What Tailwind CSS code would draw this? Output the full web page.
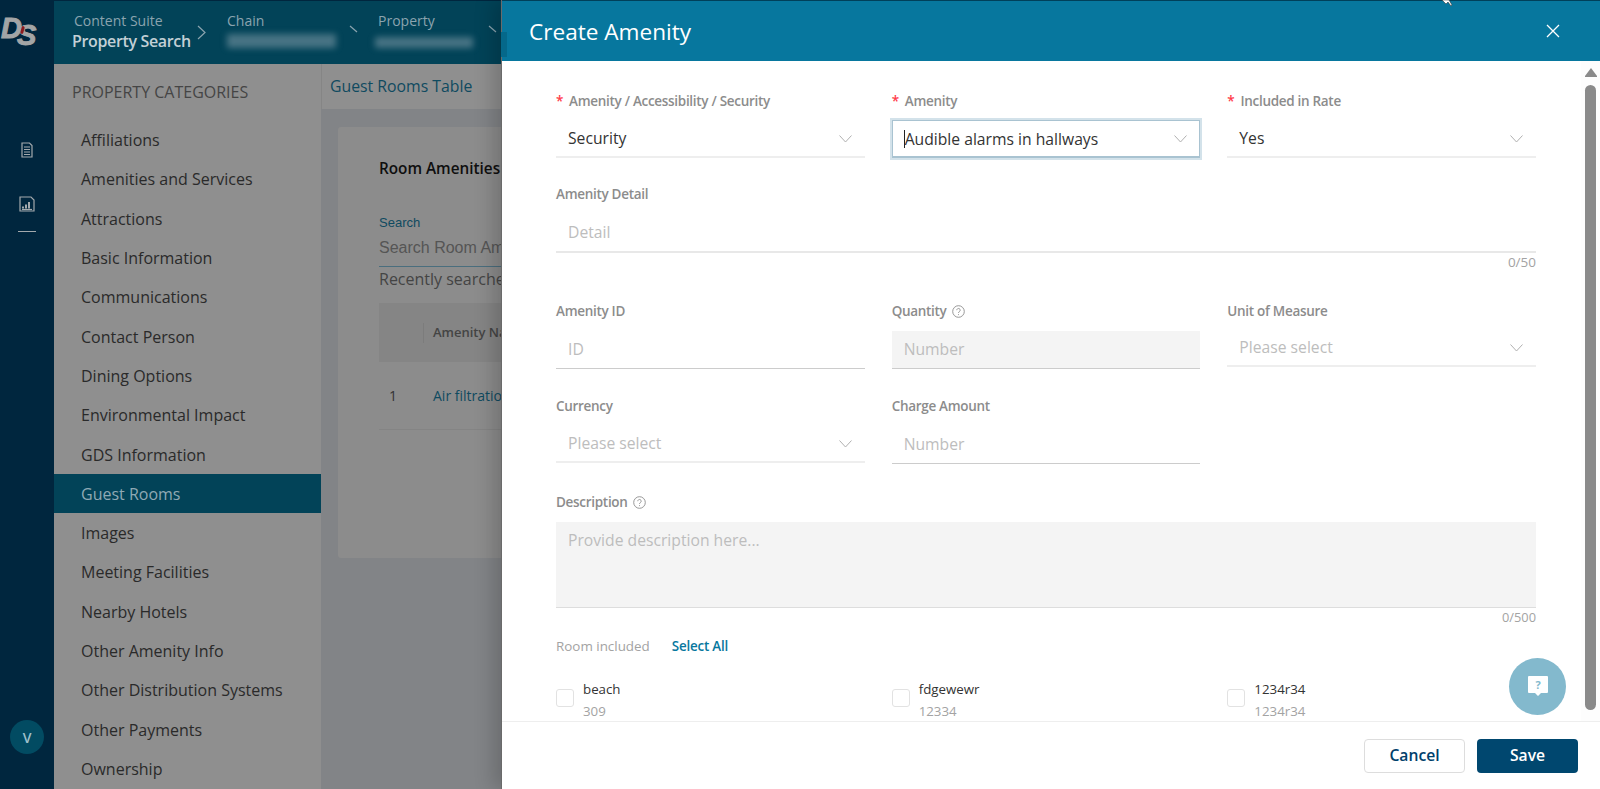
<!DOCTYPE html>
<html lang="en">
<head>
    <meta charset="UTF-8">
    <title>Create Amenity</title>
    <script src="https://cdn.jsdelivr.net/npm/@tailwindcss/browser@4"></script>
</head>
<body class="font-['Open_Sans',sans-serif] overflow-hidden bg-[#828487]">
<div class="relative flex h-[789px] w-[1600px] overflow-hidden">

    <!-- Icon rail -->
    <aside class="flex w-[54px] shrink-0 flex-col items-center bg-[#00263e]">
        <div class="relative mt-[10px] ml-[1px] h-[36px] w-[40px] self-start font-['Liberation_Sans',sans-serif] text-[29px] leading-[36px] font-bold text-[#a3a5a6] italic [-webkit-text-stroke:1px_#a3a5a6]">
            <span class="absolute top-0 left-0">D</span>
            <span class="absolute top-[7px] left-[16px]">S</span>
            <span class="absolute top-[16px] left-[20px] h-[8px] w-[3px] rotate-[15deg] rounded-full bg-[#8c1a1f]"></span>
        </div>
        <svg class="mt-[96px]" width="12" height="16" viewBox="0 0 12 16" fill="none" stroke="#a3a9ad" stroke-width="1.2"><path d="M1 1h7.5L11 3.5V15H1z"/><path d="M3 5h6M3 7.5h6M3 10h6M3 12.5h6"/></svg>
        <svg class="mt-[38px]" width="16" height="16" viewBox="0 0 16 16" fill="none" stroke="#a3a9ad" stroke-width="1.2"><path d="M1 1h11l3 3v11H1z"/><path d="M4 12.5v-2M7 12.5v-4M10 12.5V6" stroke-width="2"/><path d="M3 13.5h10"/></svg>
        <div class="mt-[19px] h-px w-[18px] bg-[#a3a9ad]"></div>
        <div class="mt-auto mb-[35px] flex h-[34px] w-[34px] items-center justify-center rounded-full bg-[#024b62] text-[14px] font-semibold text-[#9fc0cb]">V</div>
    </aside>

    <div class="flex min-w-0 flex-1 flex-col">
        <!-- Breadcrumb header -->
        <header class="flex h-[64px] shrink-0 items-center border-t border-[#00263e] bg-[#024358]">
            <div class="-mt-[4px] ml-[18px] w-[125px] leading-[20px]">
                <p class="pl-[2px] text-[14px] text-[#8ba4af]">Content Suite</p>
                <p class="text-[16px] font-semibold tracking-[-0.35px] whitespace-nowrap text-[#c3d0d6]">Property Search</p>
            </div>
            <svg width="9" height="15" viewBox="0 0 9 15" fill="none" stroke="#8ba4af" stroke-width="1.2"><path d="M1 1l7 6.5L1 14"/></svg>
            <div class="-mt-[4px] ml-[21px] w-[122px] leading-[20px]">
                <p class="text-[14px] text-[#8ba4af]">Chain</p>
                <p class="mt-[3px] mb-[3px] h-[14px] w-[109px] bg-[#8ba4af]/50 blur-[3px]"></p>
            </div>
            <svg class="-mt-[8px]" width="9" height="8" viewBox="0 0 9 8" fill="none" stroke="#8ba4af" stroke-width="1.2"><path d="M1 1l7 6"/></svg>
            <div class="-mt-[4px] ml-[20px] w-[110px] leading-[20px]">
                <p class="text-[14px] text-[#8ba4af]">Property</p>
                <p class="mt-[6px] mb-[3px] ml-[-3px] h-[11px] w-[98px] bg-[#8ba4af]/50 blur-[3px]"></p>
            </div>
            <svg class="-mt-[8px]" width="9" height="8" viewBox="0 0 9 8" fill="none" stroke="#8ba4af" stroke-width="1.2"><path d="M1 1l7 6"/></svg>
        </header>

        <div class="flex min-h-0 flex-1">
            <!-- Property categories -->
            <nav class="w-[267px] shrink-0 bg-[#8f8f8f]">
                <h2 class="mt-[18px] ml-[18px] text-[16px] leading-[20px] text-[#454545]">PROPERTY CATEGORIES</h2>
                <ul class="mt-[18.5px] text-[16px] text-[#2a2a2a]">
                    <li class="flex h-[39.3px] items-center pl-[27px]">Affiliations</li>
                    <li class="flex h-[39.3px] items-center pl-[27px]">Amenities and Services</li>
                    <li class="flex h-[39.3px] items-center pl-[27px]">Attractions</li>
                    <li class="flex h-[39.3px] items-center pl-[27px]">Basic Information</li>
                    <li class="flex h-[39.3px] items-center pl-[27px]">Communications</li>
                    <li class="flex h-[39.3px] items-center pl-[27px]">Contact Person</li>
                    <li class="flex h-[39.3px] items-center pl-[27px]">Dining Options</li>
                    <li class="flex h-[39.3px] items-center pl-[27px]">Environmental Impact</li>
                    <li class="flex h-[39.3px] items-center pl-[27px]">GDS Information</li>
                    <li class="flex h-[39.3px] items-center bg-[#024358] pl-[27px] text-[#8fa9b4]">Guest Rooms</li>
                    <li class="flex h-[39.3px] items-center pl-[27px]">Images</li>
                    <li class="flex h-[39.3px] items-center pl-[27px]">Meeting Facilities</li>
                    <li class="flex h-[39.3px] items-center pl-[27px]">Nearby Hotels</li>
                    <li class="flex h-[39.3px] items-center pl-[27px]">Other Amenity Info</li>
                    <li class="flex h-[39.3px] items-center pl-[27px]">Other Distribution Systems</li>
                    <li class="flex h-[39.3px] items-center pl-[27px]">Other Payments</li>
                    <li class="flex h-[39.3px] items-center pl-[27px]">Ownership</li>
                </ul>
            </nav>

            <!-- Page behind the drawer -->
            <main class="min-w-0 flex-1 overflow-hidden whitespace-nowrap">
                <div class="flex h-[45px] items-center border-l border-[#858585] bg-[#8f8f8f] pl-[8px] text-[15.8px] text-[#0f4a60]">Guest Rooms Table</div>
                <section class="mt-[18px] ml-[17px] h-[431px] rounded-l-[3px] bg-[#8c8c8c] pt-[31px] pl-[41px]">
                    <h3 class="text-[15.3px] leading-[20px] font-semibold text-[#0f0f0f]">Room Amenities</h3>
                    <p class="mt-[35px] font-['Liberation_Sans',sans-serif] text-[13px] leading-[20px] text-[#0f4a60]">Search</p>
                    <p class="mt-[4px] h-[30px] border-b border-[#4a6e7e] font-['Liberation_Sans',sans-serif] text-[16px] leading-[22px] text-[#555]">Search Room Amenities</p>
                    <p class="text-[16px] leading-[24px] text-[#444]">Recently searched</p>
                    <div class="mt-[12px] flex h-[59px] items-center bg-[#858585]">
                        <span class="ml-[44px] h-[20px] w-px bg-[#7c7c7c]"></span>
                        <span class="ml-[9px] text-[13px] font-semibold text-[#444]">Amenity Name</span>
                    </div>
                    <div class="mt-[6px] flex h-[62px] items-center border-b border-[#848484] pb-[6px] text-[14px]">
                        <span class="ml-[10px] w-[44px] text-[#333]">1</span>
                        <span class="text-[#0f4a60]">Air filtration</span>
                    </div>
                </section>
            </main>
        </div>
    </div>

    <!-- Smear of the blurred region running over the drawer edge -->
    <div class="absolute top-[32px] left-[501px] z-20 h-[25px] w-[6px] bg-[#05688a]"></div>

    <!-- Create Amenity drawer -->
    <div class="absolute top-0 right-0 bottom-0 z-10 flex w-[1099px] flex-col border-l border-[#6a6a6a] bg-white shadow-[-8px_0_18px_rgba(0,0,0,0.18)]">
        <div class="flex h-[61px] shrink-0 items-center justify-between border-t border-[#00405a] bg-[#07779e] pr-[40px] pl-[27px]">
            <h1 class="pt-[1px] text-[22.6px] text-white">Create Amenity</h1>
            <svg width="14" height="14" viewBox="0 0 14 14" fill="none" stroke="white" stroke-width="1.3"><path d="M1 1l12 12M13 1L1 13"/></svg>
        </div>

        <div class="relative min-h-0 flex-1 overflow-hidden">
            <div class="w-[1034px] pt-[30px] pl-[54px]">
                <!-- row 1 -->
                <div class="grid grid-cols-3 gap-x-[27px]">
                    <div>
                        <label class="flex h-[20px] items-center text-[13.5px] font-semibold tracking-[-0.3px] text-[#8c8c8c]"><span class="mr-[6px] text-[#ff3b4a]">*</span>Amenity / Accessibility / Security</label>
                        <div class="mt-[9px] flex h-[38px] items-center justify-between border-b-2 border-[#eeeeee] pt-[1px] pr-[13px] pl-[12px] text-[15.7px] text-[#333]">Security
                            <svg width="13" height="8" viewBox="0 0 13 8" fill="none" stroke="#b0b0b0"><path d="M.5.5l6 6.5 6-6.5"/></svg>
                        </div>
                    </div>
                    <div>
                        <label class="flex h-[20px] items-center text-[13.5px] font-semibold tracking-[-0.3px] text-[#8c8c8c]"><span class="mr-[6px] text-[#ff3b4a]">*</span>Amenity</label>
                        <div class="mt-[9px] flex h-[38px] items-center justify-between border border-b-2 border-[#a9c3d1] pr-[12px] pl-[11px] text-[15.7px] text-[#333] ring-2 ring-[#d3e2ea]">
                            <span class="border-l border-[#222] leading-[18px]">Audible alarms in hallways</span>
                            <svg width="13" height="8" viewBox="0 0 13 8" fill="none" stroke="#b0b0b0"><path d="M.5.5l6 6.5 6-6.5"/></svg>
                        </div>
                    </div>
                    <div>
                        <label class="flex h-[20px] items-center text-[13.5px] font-semibold tracking-[-0.3px] text-[#8c8c8c]"><span class="mr-[6px] text-[#ff3b4a]">*</span>Included in Rate</label>
                        <div class="mt-[9px] flex h-[38px] items-center justify-between border-b-2 border-[#eeeeee] pt-[1px] pr-[13px] pl-[12px] text-[15.7px] text-[#333]">Yes
                            <svg width="13" height="8" viewBox="0 0 13 8" fill="none" stroke="#b0b0b0"><path d="M.5.5l6 6.5 6-6.5"/></svg>
                        </div>
                    </div>
                </div>

                <!-- detail -->
                <label class="mt-[26px] flex h-[20px] items-center text-[13.5px] font-semibold tracking-[-0.3px] text-[#8c8c8c]">Amenity Detail</label>
                <div class="mt-[10px] flex h-[39px] items-center border-b-2 border-[#e8e8e8] pl-[12px] text-[15.7px] text-[#bdbdbd]">Detail</div>
                <p class="h-[19px] text-right text-[13.5px] leading-[19px] text-[#a3a3a3]">0/50</p>

                <!-- row 3 -->
                <div class="mt-[29px] grid grid-cols-3 gap-x-[27px]">
                    <div>
                        <label class="flex h-[20px] items-center text-[13.5px] font-semibold tracking-[-0.3px] text-[#8c8c8c]">Amenity ID</label>
                        <div class="mt-[10px] flex h-[38px] items-center border-b border-[#cccccc] pl-[12px] text-[15.7px] text-[#bdbdbd]">ID</div>
                    </div>
                    <div>
                        <label class="flex h-[20px] items-center text-[13.5px] font-semibold tracking-[-0.3px] text-[#8c8c8c]">Quantity
                            <svg class="ml-[5px]" width="13" height="13" viewBox="0 0 13 13" fill="none" stroke="#8c8c8c" stroke-width=".9"><circle cx="6.5" cy="6.5" r="5.8"/><path d="M4.8 5.2a1.7 1.7 0 1 1 2.6 1.4c-.6.4-.9.7-.9 1.4"/><path d="M6.5 9.2v.9"/></svg>
                        </label>
                        <div class="mt-[10px] flex h-[38px] items-center border-b border-[#cccccc] bg-[#f4f4f4] pl-[12px] text-[15.7px] text-[#bdbdbd]">Number</div>
                    </div>
                    <div>
                        <label class="flex h-[20px] items-center text-[13.5px] font-semibold tracking-[-0.3px] text-[#8c8c8c]">Unit of Measure</label>
                        <div class="mt-[9px] flex h-[37px] items-center justify-between border-b-2 border-[#eeeeee] pr-[13px] pl-[12px] text-[15.7px] text-[#bdbdbd]">Please select
                            <svg width="13" height="8" viewBox="0 0 13 8" fill="none" stroke="#b0b0b0"><path d="M.5.5l6 6.5 6-6.5"/></svg>
                        </div>
                    </div>
                </div>

                <!-- row 4 -->
                <div class="mt-[27px] grid grid-cols-3 gap-x-[27px]">
                    <div>
                        <label class="flex h-[20px] items-center text-[13.5px] font-semibold tracking-[-0.3px] text-[#8c8c8c]">Currency</label>
                        <div class="mt-[9px] flex h-[38px] items-center justify-between border-b-2 border-[#eeeeee] pt-[2px] pr-[13px] pl-[12px] text-[15.7px] text-[#bdbdbd]">Please select
                            <svg width="13" height="8" viewBox="0 0 13 8" fill="none" stroke="#b0b0b0"><path d="M.5.5l6 6.5 6-6.5"/></svg>
                        </div>
                    </div>
                    <div>
                        <label class="flex h-[20px] items-center text-[13.5px] font-semibold tracking-[-0.3px] text-[#8c8c8c]">Charge Amount</label>
                        <div class="mt-[9px] flex h-[39px] items-center border-b border-[#cccccc] pt-[1px] pl-[12px] text-[15.7px] text-[#bdbdbd]">Number</div>
                    </div>
                    <div></div>
                </div>

                <!-- description -->
                <label class="mt-[28px] flex h-[20px] items-center text-[13.5px] font-semibold tracking-[-0.3px] text-[#8c8c8c]">Description
                    <svg class="ml-[5px]" width="13" height="13" viewBox="0 0 13 13" fill="none" stroke="#8c8c8c" stroke-width=".9"><circle cx="6.5" cy="6.5" r="5.8"/><path d="M4.8 5.2a1.7 1.7 0 1 1 2.6 1.4c-.6.4-.9.7-.9 1.4"/><path d="M6.5 9.2v.9"/></svg>
                </label>
                <div class="mt-[10px] h-[86px] border-b border-[#dddddd] bg-[#f4f4f4] pt-[7px] pl-[12px] text-[15.7px] text-[#bdbdbd]">Provide description here...</div>
                <p class="h-[19px] text-right text-[12.8px] leading-[19px] text-[#a3a3a3]">0/500</p>

                <!-- rooms -->
                <div class="mt-[9px] flex h-[20px] items-center text-[13.4px]">
                    <span class="text-[#a3a3a3]">Room included</span>
                    <span class="ml-[22px] font-semibold tracking-[-0.2px] text-[#07779e]">Select All</span>
                </div>
                <div class="mt-[22px] grid grid-cols-3 gap-x-[27px] text-[13.3px] leading-[22px]">
                    <div class="flex items-start gap-[9px]">
                        <span class="mt-[11px] h-[18px] w-[18px] rounded-[3px] border border-[#e2e2e2]"></span>
                        <div><p class="text-[#333]">beach</p><p class="text-[#a3a3a3]">309</p></div>
                    </div>
                    <div class="flex items-start gap-[9px]">
                        <span class="mt-[11px] h-[18px] w-[18px] rounded-[3px] border border-[#e2e2e2]"></span>
                        <div><p class="text-[#333]">fdgewewr</p><p class="text-[#a3a3a3]">12334</p></div>
                    </div>
                    <div class="flex items-start gap-[9px]">
                        <span class="mt-[11px] h-[18px] w-[18px] rounded-[3px] border border-[#e2e2e2]"></span>
                        <div><p class="text-[#333]">1234r34</p><p class="text-[#a3a3a3]">1234r34</p></div>
                    </div>
                </div>
            </div>

            <!-- scrollbar -->
            <div class="absolute top-0 right-0 bottom-0 w-[19px] bg-[#fdfdfd]">
                <svg class="absolute top-[7px] left-[4px]" width="12" height="9" viewBox="0 0 12 9" fill="#8a8a8a"><path d="M6 0l6 8v1H0V8z"/></svg>
                <div class="absolute top-[24px] bottom-[11px] left-[4px] w-[11px] rounded-full bg-[#8a8a8a]"></div>
            </div>

            <!-- help bubble -->
            <div class="absolute top-[597px] left-[1007px] flex h-[57px] w-[57px] items-center justify-center rounded-full bg-[#83b9cd]">
                <svg width="20" height="22" viewBox="0 0 20 22"><path d="M0 1a1 1 0 0 1 1-1h18a1 1 0 0 1 1 1v15a1 1 0 0 1-1 1h-6l-3 3-3-3H1a1 1 0 0 1-1-1z" fill="white"/><text x="10" y="12.5" text-anchor="middle" font-size="11" font-weight="700" fill="#83b9cd" font-family="Open Sans">?</text></svg>
            </div>
        </div>

        <footer class="flex h-[68px] shrink-0 items-start justify-end gap-[12px] border-t border-[#eeeeee] pt-[17px] pr-[22px]">
            <button class="h-[34px] w-[101px] rounded-[4px] border border-[#dddddd] text-[15.7px] font-semibold text-[#00406b]">Cancel</button>
            <button class="h-[34px] w-[101px] rounded-[4px] bg-[#00476f] text-[15.7px] font-semibold text-white">Save</button>
        </footer>
    </div>

    <!-- mouse pointer cut off by the top of the window -->
    <svg class="absolute top-0 left-[1441px] z-30" width="12" height="7" viewBox="0 0 12 7"><path d="M1 0l4 4 2-2 3 4 1-1-3-5z" fill="white" stroke="#222" stroke-width=".5"/></svg>
</div>
</body>
</html>
